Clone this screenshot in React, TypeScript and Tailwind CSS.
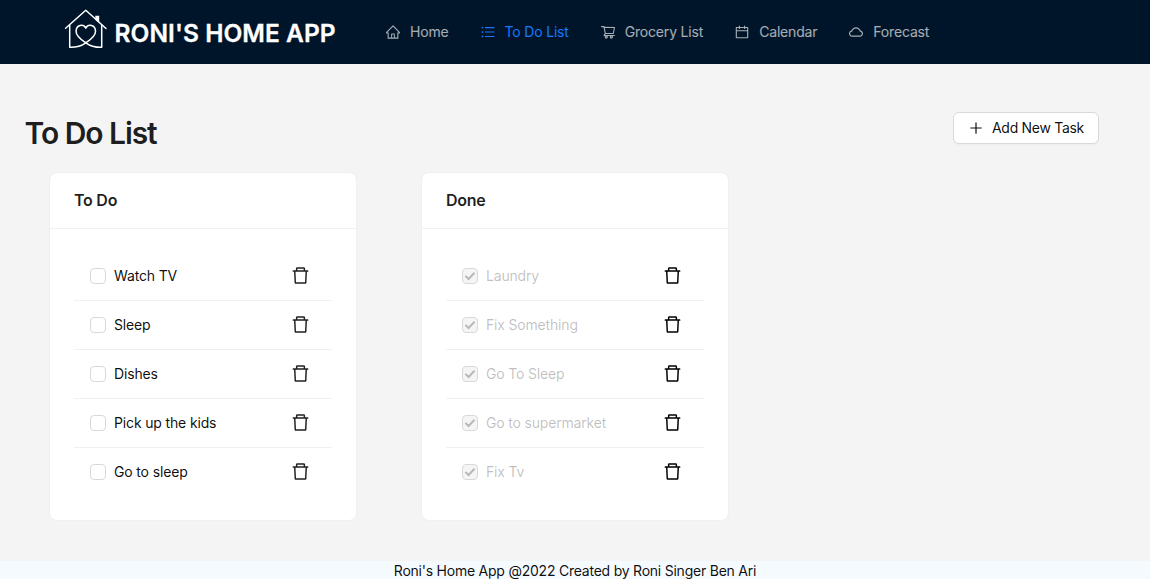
import type { ReactNode } from "react";
import {
  AiOutlineCalendar,
  AiOutlineCloud,
  AiOutlineDelete,
  AiOutlineHome,
  AiOutlinePlus,
  AiOutlineShoppingCart,
  AiOutlineUnorderedList,
} from "react-icons/ai";

const todo = ["Watch TV", "Sleep", "Dishes", "Pick up the kids", "Go to sleep"];
const done = ["Laundry", "Fix Something", "Go To Sleep", "Go to supermarket", "Fix Tv"];

function Logo() {
  return (
    <div className="flex h-16 w-[304px] shrink-0 items-start">
      <svg
        className="mt-[8px] h-[42px] w-[44px] shrink-0"
        viewBox="0 0 44 42"
        fill="none"
        stroke="#fff"
        strokeWidth="1.5"
        strokeLinecap="round"
        strokeLinejoin="round"
      >
        <path d="M1.600 20.200 21.800 2.200 42 20.500" />
        <path d="M31.300 7.800h3.900v7.500l-3.900-3.500z" fill="#fff" stroke="none" />
        <path d="M5.700 17.300V39.300c6.300 .2 11.600-1.300 16.100-4.500 3.500-2.600 9.700-6.400 9.700-11.400 0-6.600-7.300-8-9.700-3.200-2.400-4.800-9.700-3.400-9.700 3.200 0 5 6.200 8.800 9.700 11.400 4.500 3.200 9.700 4.700 15.900 4.500V17.300" />
      </svg>
      <span className="ml-[6.5px] mt-[17px] whitespace-nowrap text-[24.5px] leading-[33px] font-semibold tracking-[0.05px] text-white [-webkit-text-stroke:0.3px_white]">
        RONI'S HOME APP
      </span>
    </div>
  );
}

function NavItem({ icon, label, active }: { icon: ReactNode; label: string; active?: boolean }) {
  return (
    <li
      className={
        active
          ? "flex items-center gap-[9px] pr-[15px] pl-4 text-[#1677ff]"
          : "flex items-center gap-[9px] pr-[15px] pl-4 text-white/65"
      }
    >
      {icon}
      <span className="whitespace-nowrap tracking-[-0.18px]">{label}</span>
    </li>
  );
}

function Card({ title, tasks, checked }: { title: string; tasks: string[]; checked?: boolean }) {
  return (
    <section className="h-[349px] w-[308px] rounded-lg border border-[#f0f0f0] bg-white">
      <h2 className="flex h-[56px] items-center border-b border-[#f0f0f0] px-6 pb-px text-[16px] font-semibold tracking-[-0.25px] text-black/88">
        {title}
      </h2>
      <ul className="px-6 pt-[23px]">
        {tasks.map((task) => (
          <li key={task} className="flex h-[49px] items-center border-b border-[#f0f0f0] px-4 last:h-[48px] last:border-b-0">
            <span
              className={
                checked
                  ? "flex size-4 items-center justify-center rounded border border-[#d9d9d9] bg-[#f5f5f5]"
                  : "size-4 rounded border border-[#d9d9d9] bg-white"
              }
            >
              {checked && (
                <svg className="size-3 shrink-0" viewBox="0 0 12 12" fill="none" stroke="#b8b8b8" strokeWidth="2">
                  <path d="m1.400 5.900 3.200 3.100 5.900-6.200" />
                </svg>
              )}
            </span>
            <span
              className={
                checked ? "ml-2 flex-1 tracking-[-0.18px] text-black/25" : "ml-2 flex-1 tracking-[-0.15px] text-black/95"
              }
            >
              {task}
            </span>
            <AiOutlineDelete className={checked ? "mr-[5px] mb-px size-[21px] text-black" : "mr-[5px] mb-px size-[21px] text-black/88"} />
          </li>
        ))}
      </ul>
    </section>
  );
}

export default function App() {
  return (
    <div className="h-[582px] w-full overflow-hidden bg-white font-['Inter',sans-serif] text-[14px] leading-[22px] text-black/88">
      <div className="flex h-[579px] w-[1150px] flex-col bg-[#f4f4f4]">
        <header className="flex h-16 shrink-0 bg-[#001529] pl-[64px]">
          <Logo />
          <ul className="ml-[1px] flex h-16">
            <NavItem icon={<AiOutlineHome className="size-4" />} label="Home" />
            <NavItem icon={<AiOutlineUnorderedList className="size-4" />} label="To Do List" active />
            <NavItem icon={<AiOutlineShoppingCart className="size-4" />} label="Grocery List" />
            <NavItem icon={<AiOutlineCalendar className="size-4" />} label="Calendar" />
            <NavItem icon={<AiOutlineCloud className="size-4" />} label="Forecast" />
          </ul>
        </header>
        <main className="flex-1">
          <div className="flex h-[108px] items-start justify-between pl-[24.5px] pr-[51px] pt-[48px]">
            <h1 className="mt-[2px] text-[30px] leading-[38px] font-semibold tracking-[-1.05px]">To Do List</h1>
            <button className="flex h-8 w-[146px] items-center justify-center gap-[8px] rounded-md border border-[#d9d9d9] bg-white tracking-[-0.3px] whitespace-nowrap text-black/95 shadow-[0_2px_0_rgba(0,0,0,0.02)]">
              <AiOutlinePlus className="size-4" />
              Add New Task
            </button>
          </div>
          <div className="flex gap-16 pl-[49px]">
            <Card title="To Do" tasks={todo} />
            <Card title="Done" tasks={done} checked />
          </div>
        </main>
        <footer className="h-[18px] shrink-0 bg-[#f5faff] text-center leading-[19px] tracking-[-0.23px] text-black/95">
          Roni's Home App @2022 Created by Roni Singer Ben Ari
        </footer>
      </div>
    </div>
  );
}
